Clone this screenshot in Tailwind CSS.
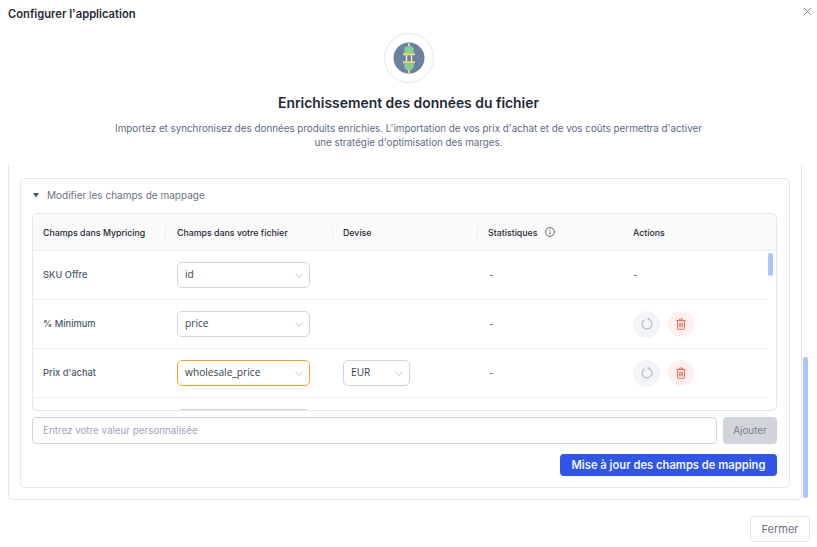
<!DOCTYPE html>
<html lang="fr">
<head>
  <meta charset="UTF-8" />
  <title>Configurer l'application</title>
  <script src="https://cdn.jsdelivr.net/npm/@tailwindcss/browser@4"></script>
</head>
<body class="bg-white font-['Inter',sans-serif]">
  <div class="relative flex h-[547px] w-[817px] flex-col overflow-hidden">

    <!-- header -->
    <div class="flex h-[33px] items-start justify-between pl-2 pr-[5px] pt-[7px]">
      <h2 class="text-[11.200px] leading-[15px] font-semibold text-[#1f2937]">Configurer l'application</h2>
      <svg class="h-[9px] w-[9px]" viewBox="0 0 10 10" fill="none" stroke="#6b7280" stroke-width="0.9"><path d="M1 1l8 8M9 1l-8 8" /></svg>
    </div>

    <!-- hero -->
    <div class="flex h-[132px] flex-col items-center">
      <svg class="h-[50px] w-[50px]" viewBox="0 0 50 50">
        <circle cx="25" cy="25" r="24.5" fill="#fff" stroke="#e4e7ef" />
        <circle cx="25" cy="25" r="15.5" fill="#6b80a3" />
        <rect x="24" y="10.500" width="2" height="3" fill="#d9d9b0" />
        <path d="M20.300 20.300v-5l1.500-1.800h6.400l1.500 1.800v5z" fill="#83d08f" />
        <rect x="19" y="20.300" width="12" height="2" fill="#f7df62" />
        <rect x="21.800" y="22.300" width="1.400" height="6" fill="#eef1f6" />
        <rect x="26.800" y="22.300" width="1.400" height="6" fill="#eef1f6" />
        <rect x="19" y="28.300" width="12" height="2" fill="#f7df62" />
        <path d="M20.300 30.300h9.400v4.200l-1.800 2.500h-5.800l-1.800-2.500z" fill="#83d08f" />
        <rect x="24" y="37" width="2" height="3" fill="#f0cf5a" />
      </svg>
      <h1 class="mt-[11px] text-[13.900px] leading-[18px] font-semibold text-[#1f2937]">Enrichissement des données du fichier</h1>
      <p class="mt-[10px] w-[600px] text-center text-[9.800px] leading-[14px] text-[#5b6b80]">Importez et synchronisez des données produits enrichies. L'importation de vos prix d'achat et de vos coûts permettra d'activer une stratégie d'optimisation des marges.</p>
    </div>

    <!-- scroll area -->
    <div class="relative h-[335px] pl-2 pr-4">
      <div class="h-[335px] w-[794px] rounded-b-[5px] border-x border-b border-[#e5e7eb] px-[11px] pt-[13px]">
        <div class="h-[310px] rounded-[5px] border border-[#e5e7eb] px-[11px]">
          <div class="flex h-[34px] items-center gap-[8px] pb-[2px] pl-[1px]">
            <svg class="h-[5px] w-[6px]" viewBox="0 0 6 5"><path d="M0 0h6L3 4.500z" fill="#4b5563" /></svg>
            <span class="text-[10px] text-[#6b7280]">Modifier les champs de mappage</span>
          </div>

          <!-- table -->
          <div class="relative h-[198px] w-[745px] overflow-hidden rounded-[5px] border border-[#e5e7eb]">
            <div class="grid h-[37px] grid-cols-[133px_167px_145px_144px_1fr] items-center border-b border-[#eceef1] bg-[#fafafa] pt-[2px] text-[8.800px] font-medium text-[#1f2937]">
              <div class="flex h-[16px] items-center border-r border-[#eceef1] pl-[10px]">Champs dans Mypricing</div>
              <div class="flex h-[16px] items-center border-r border-[#eceef1] pl-[11px]">Champs dans votre fichier</div>
              <div class="flex h-[16px] items-center border-r border-[#eceef1] pl-[10px]">Devise</div>
              <div class="flex h-[16px] items-center gap-[7px] pl-[10px]">Statistiques
                <svg class="mb-[2px] h-[10px] w-[10px]" viewBox="0 0 10 10" fill="none" stroke="#374151" stroke-width="0.8"><circle cx="5" cy="5" r="4.400" /><path d="M5 4.400v3M5 2.500v1" /></svg>
              </div>
              <div class="pl-[11px]">Actions</div>
            </div>

            <div class="w-[735px]">
              <div class="grid h-[49px] grid-cols-[133px_167px_145px_144px_1fr] items-center border-b border-[#eceef1] text-[9.300px]">
                <div class="pl-[10px] font-medium text-[#4b5b70]">SKU Offre</div>
                <div class="pl-[11px]">
                  <div class="flex h-[26px] w-[133px] items-center justify-between rounded-[5px] border border-[#d1d5db] pl-[7px] pr-[6px] font-['Open_Sans',sans-serif] text-[10.200px] text-[#374151]">id
                    <svg class="h-[5px] w-[8px]" viewBox="0 0 8 5" fill="none" stroke="#b6bbc4" stroke-width="0.8"><path d="M.5.500L4 4.500 7.500.500" /></svg>
                  </div>
                </div>
                <div></div>
                <div class="pl-[11px] text-[#4b5b70]">-</div>
                <div class="pl-[11px] text-[#4b5b70]">-</div>
              </div>

              <div class="grid h-[49px] grid-cols-[133px_167px_145px_144px_1fr] items-center border-b border-[#eceef1] text-[9.300px]">
                <div class="pl-[10px] font-medium text-[#4b5b70]">% Minimum</div>
                <div class="pl-[11px]">
                  <div class="flex h-[26px] w-[133px] items-center justify-between rounded-[5px] border border-[#d1d5db] pl-[7px] pr-[6px] font-['Open_Sans',sans-serif] text-[10.200px] text-[#374151]">price
                    <svg class="h-[5px] w-[8px]" viewBox="0 0 8 5" fill="none" stroke="#b6bbc4" stroke-width="0.8"><path d="M.5.500L4 4.500 7.500.500" /></svg>
                  </div>
                </div>
                <div></div>
                <div class="pl-[11px] text-[#4b5b70]">-</div>
                <div class="flex items-center gap-[8px] pl-[11px]">
                  <span class="flex h-[27px] w-[27px] items-center justify-center rounded-full bg-[#f3f4f9]">
                    <svg class="h-[12px] w-[12px]" viewBox="0 0 12 12" fill="none" stroke="#aab6be" stroke-width="1.100"><path d="M7.500 1.200A5 5 0 1 1 3.500 1.700" /><path d="M6.800.300l1 .9-1 .9" /></svg>
                  </span>
                  <span class="flex h-[26px] w-[26px] items-center justify-center rounded-full bg-[#fef0ee]">
                    <svg class="h-[12px] w-[10px]" viewBox="0 0 10 12" fill="none" stroke="#f4694f" stroke-width="1"><path d="M.5 2.500h9M3.500 2.500V1h3v1.500M1.500 2.500v8.200a.6.6 0 0 0 .6.600h5.800a.6.6 0 0 0 .6-.6V2.500M3.700 4.800v4.500M5 4.800v4.500M6.300 4.800v4.500" /></svg>
                  </span>
                </div>
              </div>

              <div class="grid h-[49px] grid-cols-[133px_167px_145px_144px_1fr] items-center border-b border-[#eceef1] text-[9.300px]">
                <div class="pl-[10px] font-medium text-[#4b5b70]">Prix d'achat</div>
                <div class="pl-[11px]">
                  <div class="flex h-[26px] w-[133px] items-center justify-between rounded-[5px] border border-[#f5a623] pl-[7px] pr-[6px] font-['Open_Sans',sans-serif] text-[10.200px] text-[#374151]">wholesale_price
                    <svg class="h-[5px] w-[8px]" viewBox="0 0 8 5" fill="none" stroke="#b6bbc4" stroke-width="0.8"><path d="M.5.500L4 4.500 7.500.500" /></svg>
                  </div>
                </div>
                <div class="pl-[10px]">
                  <div class="flex h-[26px] w-[67px] items-center justify-between rounded-[5px] border border-[#d1d5db] pl-[7px] pr-[6px] font-['Open_Sans',sans-serif] text-[10.200px] text-[#374151]">EUR
                    <svg class="h-[5px] w-[8px]" viewBox="0 0 8 5" fill="none" stroke="#b6bbc4" stroke-width="0.8"><path d="M.5.500L4 4.500 7.500.500" /></svg>
                  </div>
                </div>
                <div class="pl-[11px] text-[#4b5b70]">-</div>
                <div class="flex items-center gap-[8px] pl-[11px]">
                  <span class="flex h-[27px] w-[27px] items-center justify-center rounded-full bg-[#f3f4f9]">
                    <svg class="h-[12px] w-[12px]" viewBox="0 0 12 12" fill="none" stroke="#aab6be" stroke-width="1.100"><path d="M7.500 1.200A5 5 0 1 1 3.500 1.700" /><path d="M6.800.300l1 .9-1 .9" /></svg>
                  </span>
                  <span class="flex h-[26px] w-[26px] items-center justify-center rounded-full bg-[#fef0ee]">
                    <svg class="h-[12px] w-[10px]" viewBox="0 0 10 12" fill="none" stroke="#f4694f" stroke-width="1"><path d="M.5 2.500h9M3.500 2.500V1h3v1.500M1.500 2.500v8.200a.6.6 0 0 0 .6.600h5.800a.6.6 0 0 0 .6-.6V2.500M3.700 4.800v4.500M5 4.800v4.500M6.300 4.800v4.500" /></svg>
                  </span>
                </div>
              </div>

              <div class="pl-[144px] pt-[11px]">
                <div class="h-[26px] w-[133px] rounded-[5px] border border-[#d1d5db]"></div>
              </div>
            </div>

            <!-- inner scrollbar -->
            <div class="absolute right-[3px] top-[39px] h-[23px] w-[5px] rounded-full bg-[#aec3fb]"></div>
          </div>

          <!-- custom value -->
          <div class="mt-[6px] flex h-[27px] gap-[6px]">
            <div class="flex w-[685px] items-center rounded-[4px] border border-[#d1d5e0] pl-[10px] pt-[1px] text-[9.800px] text-[#a3a3b8]">Entrez votre valeur personnalisée</div>
            <div class="flex w-[54px] items-center justify-center rounded-[4px] bg-[#d1d5db] pt-[1px] text-[9.800px] text-[#7b8088]">Ajouter</div>
          </div>
          <div class="mr-[1px] mt-[10px] flex justify-end">
            <div class="flex h-[22px] w-[217px] items-center justify-center rounded-[4px] bg-[#2f55eb] text-[11.200px] font-semibold text-[#f3f5ff]">Mise à jour des champs de mapping</div>
          </div>
        </div>
      </div>
      <!-- outer scrollbar -->
      <div class="absolute left-[803px] top-[192px] h-[141px] w-[5px] rounded-full bg-[#aec3fb]"></div>
    </div>

    <!-- footer -->
    <div class="flex flex-1 items-start justify-end pr-[7px] pt-[16px]">
      <div class="flex h-[26px] w-[60px] items-center justify-center rounded-[4px] border border-[#e2e5ec] text-[11px] text-[#6b7280]">Fermer</div>
    </div>
  </div>
</body>
</html>
